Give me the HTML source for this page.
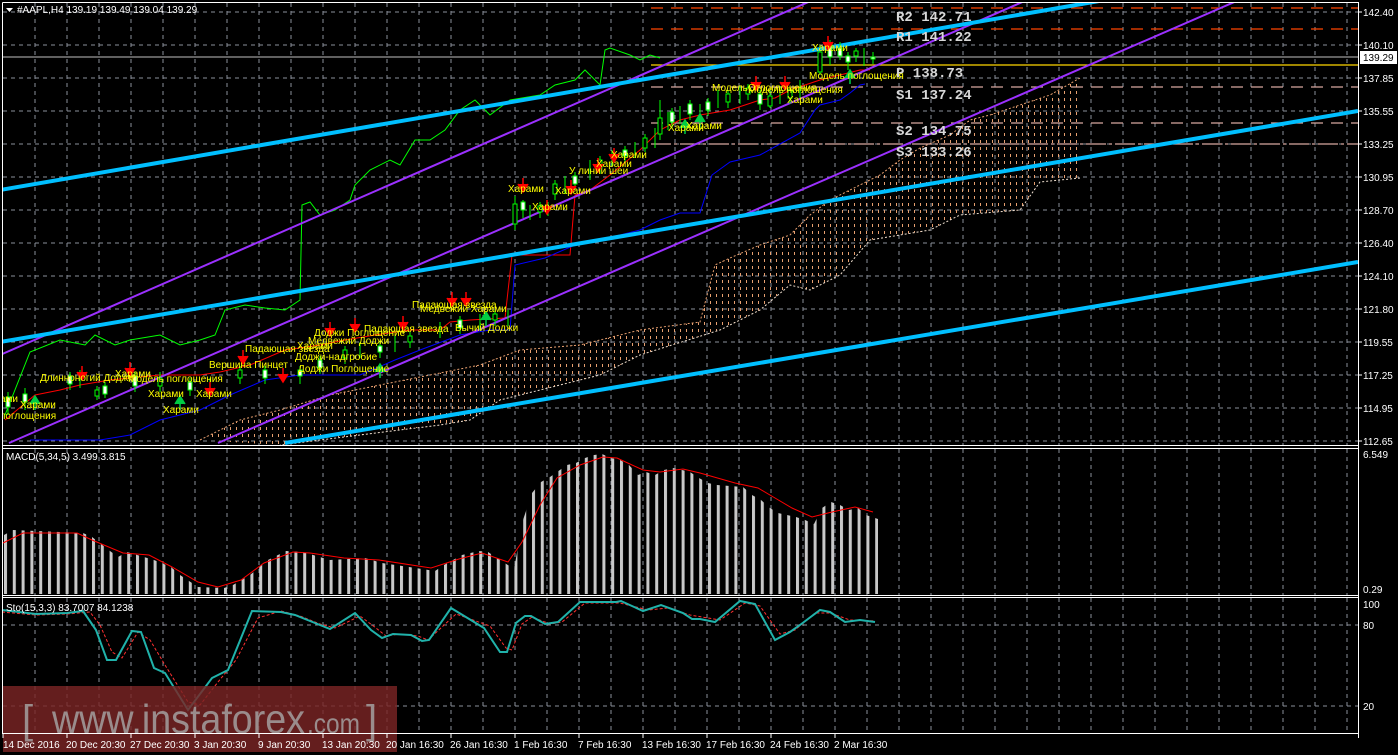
<!DOCTYPE html>
<html><head><meta charset="utf-8"><style>
html,body{margin:0;padding:0;background:#000;width:1398px;height:755px;overflow:hidden}
svg{display:block}
.t{font-family:"Liberation Sans",sans-serif;font-size:10px;fill:#fff}
.y{font-family:"Liberation Sans",sans-serif;font-size:10px;fill:#ffff00}
.pv{font-family:"Liberation Mono",monospace;font-size:14px;fill:#d8d8d8;font-weight:bold}
</style></head><body>
<svg width="1398" height="755" viewBox="0 0 1398 755" xmlns="http://www.w3.org/2000/svg">
<defs>
<pattern id="bars" patternUnits="userSpaceOnUse" x="4" y="0" width="8.8" height="10"><rect x="0" y="0" width="3" height="10" fill="#c8c8c8"/></pattern>
<pattern id="cloud" patternUnits="userSpaceOnUse" x="0" y="0" width="6" height="7"><rect x="2" y="0" width="1" height="3" fill="#e8a070"/></pattern>
<clipPath id="mainc"><rect x="3" y="3" width="1355" height="442"/></clipPath>
</defs>
<rect width="1398" height="755" fill="#000"/>
<g stroke="#8a8f9a" stroke-width="1" stroke-dasharray="4,4" fill="none">
<path d="M35 3V445M67 3V445M99 3V445M131 3V445M163 3V445M195 3V445M227 3V445M259 3V445M291 3V445M323 3V445M355 3V445M387 3V445M419 3V445M451 3V445M483 3V445M515 3V445M547 3V445M579 3V445M611 3V445M643 3V445M675 3V445M707 3V445M739 3V445M771 3V445M803 3V445M835 3V445M867 3V445M899 3V445M931 3V445M963 3V445M995 3V445M1027 3V445M1059 3V445M1091 3V445M1123 3V445M1155 3V445M1187 3V445M1219 3V445M1251 3V445M1283 3V445M1315 3V445M1347 3V445"/>
<path d="M3 12H1358M3 45H1358M3 78H1358M3 111H1358M3 144H1358M3 177H1358M3 210H1358M3 243H1358M3 276H1358M3 309H1358M3 342H1358M3 375H1358M3 408H1358M3 441H1358"/>
<path d="M35 449V595M67 449V595M99 449V595M131 449V595M163 449V595M195 449V595M227 449V595M259 449V595M291 449V595M323 449V595M355 449V595M387 449V595M419 449V595M451 449V595M483 449V595M515 449V595M547 449V595M579 449V595M611 449V595M643 449V595M675 449V595M707 449V595M739 449V595M771 449V595M803 449V595M835 449V595M867 449V595M899 449V595M931 449V595M963 449V595M995 449V595M1027 449V595M1059 449V595M1091 449V595M1123 449V595M1155 449V595M1187 449V595M1219 449V595M1251 449V595M1283 449V595M1315 449V595M1347 449V595"/>
<path d="M35 598V733M67 598V733M99 598V733M131 598V733M163 598V733M195 598V733M227 598V733M259 598V733M291 598V733M323 598V733M355 598V733M387 598V733M419 598V733M451 598V733M483 598V733M515 598V733M547 598V733M579 598V733M611 598V733M643 598V733M675 598V733M707 598V733M739 598V733M771 598V733M803 598V733M835 598V733M867 598V733M899 598V733M931 598V733M963 598V733M995 598V733M1027 598V733M1059 598V733M1091 598V733M1123 598V733M1155 598V733M1187 598V733M1219 598V733M1251 598V733M1283 598V733M1315 598V733M1347 598V733"/>
<path d="M3 625H1358M3 706H1358"/>
</g>
<g clip-path="url(#mainc)">
<polygon fill="url(#cloud)" points="200,440 240,420 280,410 330,395 380,385 430,375 480,365 520,350 580,345 640,330 700,322 715,265 730,258 760,245 790,235 810,215 830,200 860,185 880,175 900,160 920,148 950,135 970,120 990,115 1020,105 1050,95 1080,78 1080,178 1040,182 1020,210 960,215 930,230 870,240 840,275 810,290 790,285 760,310 720,330 640,355 600,375 540,390 500,400 470,420 440,425 400,430 360,435 320,440 280,445"/>
<polyline fill="none" stroke="#e8a070" stroke-dasharray="2,2" points="200,440 240,420 280,410 330,395 380,385 430,375 480,365 520,350 580,345 640,330 700,322 715,265 730,258 760,245 790,235 810,215 830,200 860,185 880,175 900,160 920,148 950,135 970,120 990,115 1020,105 1050,95 1080,78"/>
<polyline fill="none" stroke="#f0e0d0" stroke-dasharray="2,2" points="1080,178 1040,182 1020,210 960,215 930,230 870,240 840,275 810,290 790,285 760,310 720,330 640,355 600,375 540,390 500,400 470,420 440,425 400,430 360,435 320,440 280,445"/>
<g fill="none" stroke-width="1.3">
<path d="M651 8H1358M651 29H1358" stroke="#ff4500" stroke-dasharray="12,8"/>
<path d="M3 57H1358" stroke="#9a9a9a"/>
<path d="M651 65H1358" stroke="#ffd700"/>
<path d="M651 87H1358M651 123H1358" stroke="#d8a8a0" stroke-dasharray="12,8"/>
<path d="M651 144H1358" stroke="#d8a8a0" stroke-dasharray="20,3,3,3"/>
</g>
<polyline fill="none" stroke="#00ff00" stroke-width="1" points="5,415 30,352 60,340 85,345 95,335 115,345 130,340 160,335 180,345 200,340 215,335 225,310 245,305 265,308 285,310 300,300 302,205 310,202 320,215 335,210 350,200 355,185 370,170 390,160 400,165 415,140 430,140 445,130 460,110 475,100 490,115 510,100 540,95 555,85 575,80 585,70 600,85 605,50 610,48 630,55 640,60 650,55 660,58"/>
<polyline fill="none" stroke="#ff0000" stroke-width="1" points="5,420 35,395 60,390 80,385 110,380 160,375 200,375 220,372 250,365 285,350 320,345 345,340 375,335 410,330 440,330 450,322 470,320 505,318 512,255 570,255 575,195 590,190 610,175 640,150 660,130 680,120 700,115 730,110 760,100 775,98 790,90 820,80 840,75 860,70 870,70"/>
<polyline fill="none" stroke="#0000ff" stroke-width="1" points="30,440 100,440 130,435 160,420 200,410 230,395 265,380 300,375 360,375 395,360 420,350 460,335 490,330 510,330 515,265 545,258 575,245 600,240 640,230 660,220 680,213 700,213 712,175 730,162 760,155 800,133 815,110 820,105 840,100 850,93 860,85 865,84"/>
<g fill="none" stroke="#9b30ff" stroke-width="2">
<line x1="0" y1="355" x2="813" y2="0"/>
<line x1="9" y1="443" x2="1027" y2="0"/>
<line x1="218" y1="443" x2="1239" y2="0"/>
</g>
<g fill="none" stroke="#00bfff" stroke-width="4">
<line x1="0" y1="190" x2="1105" y2="0"/>
<line x1="0" y1="342" x2="1358" y2="111"/>
<line x1="285" y1="443" x2="1358" y2="262"/>
</g>
<g stroke="#00ff00" stroke-width="1">
<path d="M8 392V415M25 388V410M70 372V390M80 370V388M97 386V400M105 382V398M135 372V392M160 372V392M190 378V396M210 378V394M240 366V384M265 366V384M300 366V384M320 356V374M345 346V364M360 342V358M380 342V358M395 336V352M410 332V348M440 322V338M460 316V334M480 314V330M495 310V326M508 310V326M515 196V230M523 200V218M530 205V220M540 202V218M548 202V216M555 180V200M565 176V194M575 172V190M590 160V180M600 156V174M612 150V166M625 146V162M635 142V158M645 134V152M655 128V148M660 100V140M668 112V130M672 108V128M680 106V124M690 100V120M700 104V122M708 98V116M718 90V108M728 90V108M740 86V104M748 84V100M760 90V110M770 90V108M780 86V104M790 86V104M800 80V98M820 45V75M830 40V65M840 42V60M848 52V70M856 48V62M864 48V66M873 52V64"/>
</g>
<g stroke="#00ff00" stroke-width="1" fill="#fff">
<rect x="6" y="397" width="4" height="10"/><rect x="23" y="394" width="4" height="8"/><rect x="68" y="376" width="4" height="8"/><rect x="95" y="390" width="4" height="6" fill="#000"/><rect x="103" y="386" width="4" height="8"/><rect x="133" y="376" width="4" height="10"/><rect x="158" y="378" width="4" height="8" fill="#000"/><rect x="188" y="382" width="4" height="8"/><rect x="238" y="370" width="4" height="8" fill="#000"/><rect x="263" y="370" width="4" height="8"/><rect x="298" y="370" width="4" height="6"/><rect x="318" y="360" width="4" height="8"/><rect x="343" y="350" width="4" height="8" fill="#000"/><rect x="378" y="346" width="4" height="6"/><rect x="408" y="336" width="4" height="6" fill="#000"/><rect x="458" y="320" width="4" height="8"/><rect x="493" y="314" width="4" height="6" fill="#000"/><rect x="513" y="204" width="4" height="20" fill="#000"/><rect x="521" y="202" width="4" height="8"/><rect x="538" y="206" width="4" height="6" fill="#000"/><rect x="553" y="184" width="4" height="10" fill="#000"/><rect x="573" y="176" width="4" height="8"/><rect x="598" y="160" width="4" height="8" fill="#000"/><rect x="623" y="150" width="4" height="6"/><rect x="643" y="138" width="4" height="10" fill="#000"/><rect x="658" y="118" width="4" height="16" fill="#000"/><rect x="670" y="112" width="4" height="10"/><rect x="688" y="104" width="4" height="10"/><rect x="706" y="102" width="4" height="8"/><rect x="726" y="94" width="4" height="8" fill="#000"/><rect x="746" y="88" width="4" height="6" fill="#000"/><rect x="758" y="94" width="4" height="10"/><rect x="768" y="96" width="4" height="10" fill="#000"/><rect x="788" y="90" width="4" height="8" fill="#000"/><rect x="818" y="52" width="4" height="20" fill="#000"/><rect x="828" y="45" width="4" height="12"/><rect x="838" y="48" width="4" height="8"/><rect x="846" y="56" width="4" height="6"/><rect x="854" y="51" width="4" height="5" fill="#000"/><rect x="871" y="57" width="4" height="2"/>
</g>
<g fill="#ff0000" stroke="#ff0000" stroke-width="1.5">
<path d="M82 366V378M77 372L82 380L87 372"/><path d="M130 362V374M125 368L130 376L135 368"/><path d="M210 382V394M205 388L210 396L215 388"/><path d="M243 350V362M238 356L243 364L248 356"/><path d="M283 368V380M278 374L283 382L288 374"/><path d="M330 322V334M325 328L330 336L335 328"/><path d="M355 318V330M350 324L355 332L360 324"/><path d="M403 316V328M398 322L403 330L408 322"/><path d="M452 292V304M447 298L452 306L457 298"/><path d="M466 292V304M461 298L466 306L471 298"/><path d="M523 178V190M518 184L523 192L528 184"/><path d="M547 200V212M542 206L547 214L552 206"/><path d="M571 180V192M566 186L571 194L576 186"/><path d="M598 158V170M593 164L598 172L603 164"/><path d="M614 148V160M609 154L614 162L619 154"/><path d="M756 76V88M751 82L756 90L761 82"/><path d="M785 76V88M780 82L785 90L790 82"/><path d="M828 36V48M823 42L828 50L833 42"/>
</g>
<g fill="#00cc44" stroke="#00cc44" stroke-width="1.5">
<path d="M35 410V398M30 404L35 396L40 404"/><path d="M180 410V398M175 404L180 396L185 404"/><path d="M380 378V366M375 372L380 364L385 372"/><path d="M486 326V314M481 320L486 312L491 320"/><path d="M685 134V122M680 128L685 120L690 128"/><path d="M700 128V116M695 122L700 114L705 122"/><path d="M850 84V72M845 78L850 70L855 78"/>
</g>
<g class="y">
<text x="40" y="381">Длинноногий Доджи</text><text x="115" y="377">Харами</text><text x="128" y="382">Модель поглощения</text><text x="148" y="397">Харами</text><text x="163" y="413">Харами</text><text x="0" y="402">ами</text><text x="20" y="408">Харами</text><text x="0" y="419">поглощения</text><text x="196" y="397">Харами</text>
<text x="209" y="368">Вершина Пинцет</text><text x="245" y="352">Падающая звезда</text><text x="297" y="349">Харами</text><text x="295" y="360">Доджи-надгробие</text><text x="298" y="372">Доджи Поглощение</text><text x="314" y="336">Доджи Поглощение</text><text x="308" y="344">Медвежий Доджи</text><text x="364" y="332">Падающая звезда</text><text x="412" y="308">Падающая звезда</text><text x="420" y="312">Медвежий Харами</text><text x="455" y="331">Бычий Доджи</text>
<text x="508" y="192">Харами</text><text x="532" y="210">Харами</text><text x="555" y="194">Харами</text><text x="569" y="174">У линии шеи</text><text x="596" y="167">Харами</text><text x="611" y="158">Харами</text><text x="668" y="131">Харами</text><text x="686" y="129">Харами</text><text x="712" y="91">МодельОтпоглощения</text><text x="748" y="93">Модель поглощения</text><text x="787" y="103">Харами</text><text x="812" y="51">Харами</text><text x="809" y="79">Модель поглощения</text>
</g>
</g>
<text class="pv" x="896" y="21">R2 142.71</text><text class="pv" x="896" y="41">R1 141.22</text><text class="pv" x="896" y="77">P  138.73</text><text class="pv" x="896" y="99">S1 137.24</text><text class="pv" x="896" y="135">S2 134.75</text><text class="pv" x="896" y="156">S3 133.26</text>
<polygon fill="url(#bars)" points="4,594 4,535 13,530 83,533 92,537 110,551 118,557 127,552 154,560 171,567 180,575 198,587 224,588 233,585 250,575 268,560 286,551 303,552 330,560 365,558 382,563 409,567 435,571 444,565 462,555 479,551 488,552 497,558 514,569 523,520 532,493 541,482 550,477 567,465 576,463 585,458 594,455 602,454 611,458 620,460 629,465 638,475 646,472 655,475 664,470 673,468 682,470 690,472 699,478 708,483 717,485 743,487 752,495 761,500 770,508 778,513 796,517 805,520 814,524 822,508 831,502 840,505 849,510 858,508 866,515 878,519 878,594"/>
<polyline fill="none" stroke="#ff0000" stroke-width="1" points="3,543 23,533 77,533 92,540 123,553 149,555 172,567 198,582 218,587 241,580 264,563 293,552 310,553 344,558 379,560 431,568 459,559 482,553 508,562 522,542 540,505 557,478 580,465 603,457 617,458 643,470 660,472 683,469 700,473 735,483 758,488 775,498 792,508 812,517 832,512 855,507 873,512"/>
<text class="t" x="6" y="460">MACD(5,34,5) 3.499 3.815</text>
<polyline fill="none" stroke="#ff3030" stroke-width="1" stroke-dasharray="3,2" points="2,612 36,615 67,614 90,612 100,625 112,652 122,658 138,632 150,640 165,665 188,702 200,705 218,682 236,660 258,618 281,611 300,616 320,624 335,628 360,616 376,628 386,636 400,634 418,636 428,640 456,614 490,626 506,648 512,650 522,624 532,617 550,624 562,622 585,603 620,603 648,610 668,608 690,615 720,620 745,603 760,606 780,634 795,630 815,613 830,613 850,620 875,621"/>
<polyline fill="none" stroke="#20b2aa" stroke-width="2" points="2,610 36,614 67,613 83,611 96,630 107,660 116,660 132,631 141,632 154,668 165,673 188,710 212,678 228,670 252,611 281,612 295,615 315,623 330,629 355,613 371,630 382,638 393,634 411,635 422,641 429,640 451,608 484,628 500,652 507,652 516,623 525,616 531,616 545,624 558,622 580,602 616,602 621,601 643,611 661,605 683,613 692,619 700,619 715,622 740,601 755,604 775,640 790,632 800,625 820,610 830,612 845,622 860,620 875,622"/>
<text class="t" x="6" y="611">Sto(15,3,3) 83.7007 84.1238</text>
<rect x="3" y="686" width="394" height="66" fill="#7a2424" fill-opacity="0.82"/>
<text x="22" y="733" font-family="'Liberation Sans',sans-serif" font-size="40" fill="#9a8c8c">[</text>
<text x="52" y="733" font-family="'Liberation Sans',sans-serif" font-size="41" fill="#9a8c8c" textLength="253" lengthAdjust="spacingAndGlyphs">www.instaforex</text>
<text x="307" y="733" font-family="'Liberation Sans',sans-serif" font-size="28" fill="#9a8c8c" textLength="53" lengthAdjust="spacingAndGlyphs">.com</text>
<text x="366" y="733" font-family="'Liberation Sans',sans-serif" font-size="40" fill="#9a8c8c">]</text>
<g stroke="#fff" stroke-width="1" fill="none">
<path d="M2.5 2.5H1358.5V738M2.5 2.5V733.5H1358.5M2.5 445.5H1358.5M2.5 448.5H1358.5M2.5 595.5H1358.5M2.5 597.5H1358.5"/>
</g>
<g stroke="#fff"><path d="M1358 12h4M1358 45h4M1358 78h4M1358 111h4M1358 144h4M1358 177h4M1358 210h4M1358 243h4M1358 276h4M1358 309h4M1358 342h4M1358 375h4M1358 408h4M1358 441h4"/></g>
<g class="t">
<text x="1363" y="16">142.40</text><text x="1363" y="49">140.10</text><text x="1363" y="82">137.85</text><text x="1363" y="115">135.55</text><text x="1363" y="148">133.25</text><text x="1363" y="181">130.95</text><text x="1363" y="214">128.70</text><text x="1363" y="247">126.40</text><text x="1363" y="280">124.10</text><text x="1363" y="313">121.80</text><text x="1363" y="346">119.55</text><text x="1363" y="379">117.25</text><text x="1363" y="412">114.95</text><text x="1363" y="445">112.65</text>
<text x="1363" y="458">6.549</text><text x="1363" y="593">0.29</text>
<text x="1363" y="608">100</text><text x="1363" y="629">80</text><text x="1363" y="710">20</text>
</g>
<rect x="1360" y="51" width="37" height="13" fill="#fff"/>
<text x="1363" y="61" font-family="'Liberation Sans',sans-serif" font-size="10" fill="#000">139.29</text>
<path d="M6 8h7l-3.5 4z" fill="#fff"/>
<text class="t" x="17" y="13">#AAPL,H4  139.19 139.49 139.04 139.29</text>
<g class="t">
<text x="3" y="748">14 Dec 2016</text><text x="66" y="748">20 Dec 20:30</text><text x="130" y="748">27 Dec 20:30</text><text x="194" y="748">3 Jan 20:30</text><text x="258" y="748">9 Jan 20:30</text><text x="322" y="748">13 Jan 20:30</text><text x="386" y="748">20 Jan 16:30</text><text x="450" y="748">26 Jan 16:30</text><text x="514" y="748">1 Feb 16:30</text><text x="578" y="748">7 Feb 16:30</text><text x="642" y="748">13 Feb 16:30</text><text x="706" y="748">17 Feb 16:30</text><text x="770" y="748">24 Feb 16:30</text><text x="834" y="748">2 Mar 16:30</text>
</g>
<g stroke="#fff"><path d="M3 734v4M67 734v4M131 734v4M195 734v4M259 734v4M323 734v4M387 734v4M451 734v4M515 734v4M579 734v4M643 734v4M707 734v4M771 734v4M835 734v4"/></g>
</svg>
</body></html>
